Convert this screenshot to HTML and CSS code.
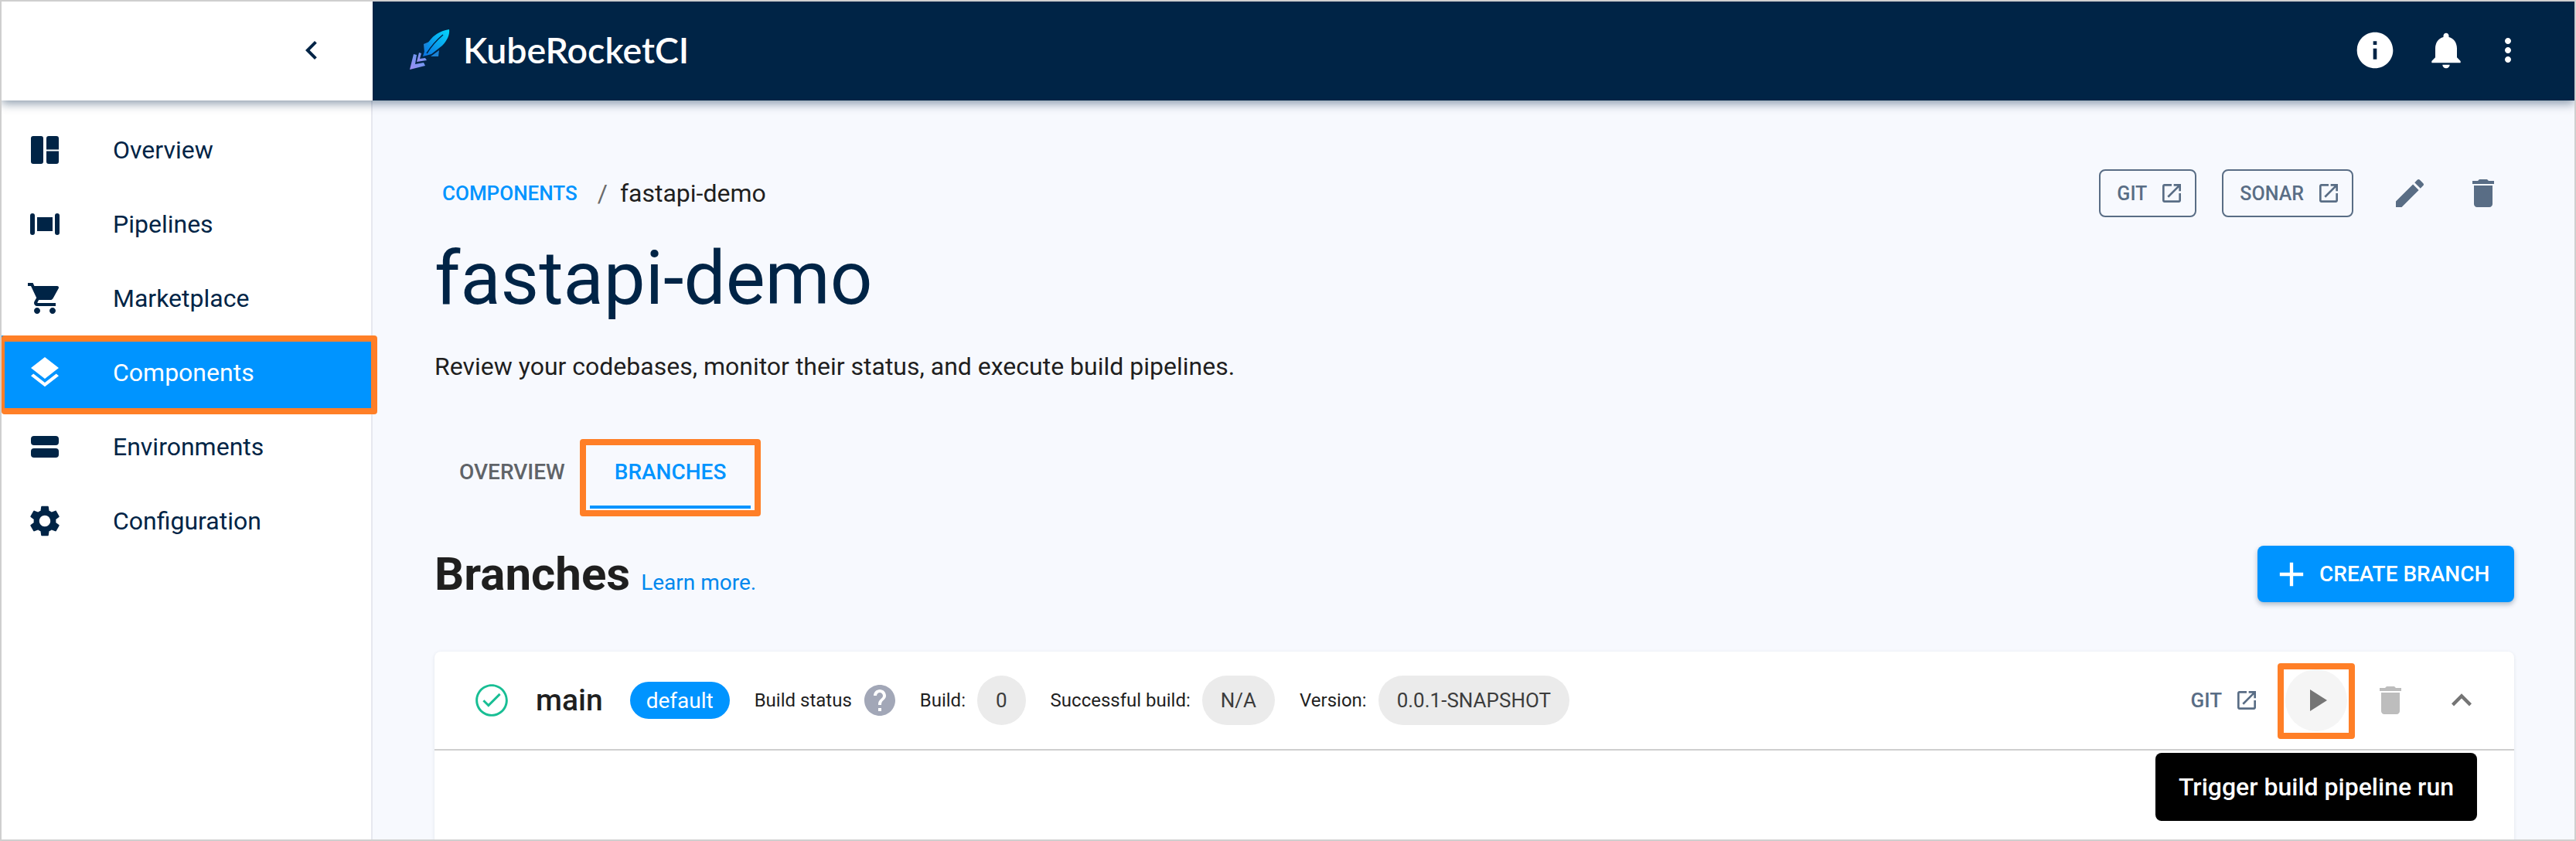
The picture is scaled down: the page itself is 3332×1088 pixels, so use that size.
FILE: index.html
```html
<!DOCTYPE html>
<html lang="en">
  <head>
    <meta charset="UTF-8" />
    <meta name="viewport" content="width=device-width, initial-scale=1.0" />
    <title>KubeRocketCI - fastapi-demo</title>
    <link rel="stylesheet" href="styles.css">
  </head>
  <body>
    <div class="frame">
      <header class="topbar">
        <div class="topbar-left">
          <svg class="icon collapse" viewBox="0 0 24 24"><path d="M15.41 7.41 14 6l-6 6 6 6 1.41-1.41L10.83 12z"/></svg>
        </div>
        <div class="topbar-right">
          <div class="brand">
            <svg class="logo" viewBox="0 0 52 52">
              <defs>
                <linearGradient id="body" x1="1" y1="0" x2="0" y2="1">
                  <stop offset="0" stop-color="#05d8fb"/>
                  <stop offset="1" stop-color="#0b6fe0"/>
                </linearGradient>
                <linearGradient id="tail" x1="1" y1="0" x2="0" y2="1">
                  <stop offset="0" stop-color="#5a9cf0"/>
                  <stop offset="1" stop-color="#a08cf2"/>
                </linearGradient>
              </defs>
              <path d="M18 19L25 16 19 30z" fill="#1b83d6"/>
              <path d="M38 27L37 35 27 35z" fill="#1b83d6"/>
              <path d="M51 0C52 7 48 15 42 21L28 32 17 35 20 25C22 20 24 16 27 13 30 9 38 2 51 0z" fill="url(#body)"/>
              <path d="M43 7C37 12 29 20 22 31" stroke="#002446" stroke-width="1.5" fill="none"/>
              <path d="M5 32L0 52 20 47 18 43 7 45 9 33z" fill="url(#tail)"/>
              <path d="M12 30L9 42 22 40 20 37 13 38 15 31z" fill="url(#tail)"/>
            </svg>
            <span class="brand-name">KubeRocketCI</span>
          </div>
          <div class="topbar-icons">
            <svg class="icon icon-lg" viewBox="0 0 24 24"><path d="M12 2C6.48 2 2 6.48 2 12s4.48 10 10 10 10-4.48 10-10S17.52 2 12 2zm1 15h-2v-6h2v6zm0-8h-2V7h2v2z"/></svg>
            <svg class="icon icon-lg" viewBox="0 0 24 24"><path d="M12 22c1.1 0 2-.9 2-2h-4c0 1.1.89 2 2 2zm6-6v-5c0-3.07-1.64-5.64-4.5-6.32V4c0-.83-.67-1.5-1.5-1.5s-1.5.67-1.5 1.5v.68C7.63 5.36 6 7.92 6 11v5l-2 2v1h16v-1l-2-2z"/></svg>
            <svg class="icon" viewBox="0 0 24 24"><path d="M12 8c1.1 0 2-.9 2-2s-.9-2-2-2-2 .9-2 2 .9 2 2 2zm0 2c-1.1 0-2 .9-2 2s.9 2 2 2 2-.9 2-2-.9-2-2-2zm0 6c-1.1 0-2 .9-2 2s.9 2 2 2 2-.9 2-2-.9-2-2-2z"/></svg>
          </div>
        </div>
      </header>

      <div class="content">
        <nav class="sidebar">
          <a class="nav-item">
            <svg class="icon" viewBox="0 0 24 24"><rect x="3" y="3" width="8" height="18" rx="1.5"/><path d="M13 4.5A1.5 1.5 0 0 1 14.5 3h5A1.5 1.5 0 0 1 21 4.5v7.25h-8zM13 12.75h8v6.75a1.5 1.5 0 0 1-1.5 1.5h-5a1.5 1.5 0 0 1-1.5-1.5z"/></svg>
            Overview
          </a>
          <a class="nav-item">
            <svg class="icon" viewBox="0 0 24 24"><rect x="2.5" y="5" width="3" height="14" rx="1.5"/><rect x="7" y="7.5" width="10" height="9"/><rect x="18.5" y="5" width="3" height="14" rx="1.5"/></svg>
            Pipelines
          </a>
          <a class="nav-item">
            <svg class="icon" viewBox="0 0 24 24"><path d="M7 18c-1.1 0-1.99.9-1.99 2S5.9 22 7 22s2-.9 2-2-.9-2-2-2zM1 2v2h2l3.6 7.59-1.35 2.45c-.16.28-.25.61-.25.96 0 1.1.9 2 2 2h12v-2H7.42c-.14 0-.25-.11-.25-.25l.03-.12.9-1.63h7.45c.75 0 1.41-.41 1.75-1.03l3.58-6.49c.08-.14.12-.31.12-.48 0-.55-.45-1-1-1H5.21l-.94-2H1zm16 16c-1.1 0-1.99.9-1.99 2s.89 2 1.99 2 2-.9 2-2-.9-2-2-2z"/></svg>
            Marketplace
          </a>
          <a class="nav-item active">
            <svg class="icon" viewBox="0 0 24 24"><path d="M11.99 18.54l-7.37-5.73L3 14.07l9 7 9-7-1.63-1.27-7.38 5.74zM12 16l7.36-5.73L21 9l-9-7-9 7 1.63 1.27L12 16z"/></svg>
            Components
            <span class="mark mark-nav"></span>
          </a>
          <a class="nav-item">
            <svg class="icon" viewBox="0 0 24 24"><rect x="3" y="5" width="18" height="6" rx="2"/><rect x="3" y="13" width="18" height="6" rx="2"/></svg>
            Environments
          </a>
          <a class="nav-item">
            <svg class="icon" viewBox="0 0 24 24"><path d="M19.14 12.94c.04-.3.06-.61.06-.94 0-.32-.02-.64-.07-.94l2.03-1.58c.18-.14.23-.41.12-.61l-1.92-3.32c-.12-.22-.37-.29-.59-.22l-2.39.96c-.5-.38-1.03-.7-1.62-.94l-.36-2.54c-.04-.24-.24-.41-.48-.41h-3.84c-.24 0-.43.17-.47.41l-.36 2.54c-.59.24-1.13.57-1.62.94l-2.39-.96c-.22-.08-.47 0-.59.22L2.74 8.87c-.12.21-.08.47.12.61l2.03 1.58c-.05.3-.09.63-.09.94s.02.64.07.94l-2.03 1.58c-.18.14-.23.41-.12.61l1.92 3.32c.12.22.37.29.59.22l2.39-.96c.5.38 1.03.7 1.62.94l.36 2.54c.05.24.24.41.48.41h3.84c.24 0 .44-.17.47-.41l.36-2.54c.59-.24 1.13-.56 1.62-.94l2.39.96c.22.08.47 0 .59-.22l1.92-3.32c.12-.22.07-.47-.12-.61l-2.01-1.58zM12 15.6c-1.98 0-3.6-1.62-3.6-3.6s1.62-3.6 3.6-3.6 3.6 1.62 3.6 3.6-1.62 3.6-3.6 3.6z"/></svg>
            Configuration
          </a>
        </nav>

        <main class="page">
          <div class="page-top">
            <div class="breadcrumbs">
              <a class="crumb-link">COMPONENTS</a>
              <span class="crumb-sep">/</span>
              <span class="crumb-current">fastapi-demo</span>
            </div>
            <div class="page-actions">
              <a class="outline-btn">GIT
                <svg class="icon icon-sm" viewBox="0 0 24 24"><path d="M19 19H5V5h7V3H5c-1.11 0-2 .9-2 2v14c0 1.1.89 2 2 2h14c1.1 0 2-.9 2-2v-7h-2v7zM14 3v2h3.59l-9.83 9.83 1.41 1.41L19 6.41V10h2V3h-7z"/></svg>
              </a>
              <a class="outline-btn">SONAR
                <svg class="icon icon-sm" viewBox="0 0 24 24"><path d="M19 19H5V5h7V3H5c-1.11 0-2 .9-2 2v14c0 1.1.89 2 2 2h14c1.1 0 2-.9 2-2v-7h-2v7zM14 3v2h3.59l-9.83 9.83 1.41 1.41L19 6.41V10h2V3h-7z"/></svg>
              </a>
              <svg class="icon icon-slate edit-icon" viewBox="0 0 24 24"><path d="M3 17.25V21h3.75L17.81 9.94l-3.75-3.75L3 17.25zM20.71 7.04c.39-.39.39-1.02 0-1.41l-2.34-2.34c-.39-.39-1.02-.39-1.41 0l-1.83 1.83 3.75 3.75 1.83-1.83z"/></svg>
              <svg class="icon icon-slate delete-icon" viewBox="0 0 24 24"><path d="M6 19c0 1.1.9 2 2 2h8c1.1 0 2-.9 2-2V7H6v12zM19 4h-3.5l-1-1h-5l-1 1H5v2h14V4z"/></svg>
            </div>
          </div>

          <h1 class="title">fastapi-demo</h1>
          <p class="description">Review your codebases, monitor their status, and execute build pipelines.</p>

          <div class="tabs">
            <a class="tab">OVERVIEW</a>
            <a class="tab selected">BRANCHES<span class="mark mark-tab"></span></a>
          </div>

          <div class="section-head">
            <div class="section-title">
              <h2>Branches</h2>
              <a class="learn-more">Learn more.</a>
            </div>
            <button class="create-btn">
              <svg class="icon plus-icon" viewBox="0 0 24 24"><path d="M19 13h-6v6h-2v-6H5v-2h6V5h2v6h6v2z"/></svg>
              CREATE BRANCH
            </button>
          </div>

          <section class="card">
            <div class="card-head">
              <svg class="icon status-icon" viewBox="0 0 24 24"><path d="M12 2C6.48 2 2 6.48 2 12s4.48 10 10 10 10-4.48 10-10S17.52 2 12 2zm0 18.6c-4.74 0-8.6-3.86-8.6-8.6S7.26 3.4 12 3.4s8.6 3.86 8.6 8.6-3.86 8.6-8.6 8.6zm4.6-13.02L10 14.17l-2.6-2.58L6.4 12.6l3.6 3.6 7.6-7.6z"/></svg>
              <span class="branch-name">main</span>
              <span class="default-chip">default</span>
              <div class="meta meta-status">
                <span>Build status</span>
                <svg class="icon help-icon" viewBox="0 0 24 24"><path d="M12 2C6.48 2 2 6.48 2 12s4.48 10 10 10 10-4.48 10-10S17.52 2 12 2zm1 17h-2v-2h2v2zm2.07-7.75-.9.92C13.45 12.9 13 13.5 13 15h-2v-.5c0-1.1.45-2.1 1.17-2.83l1.24-1.26c.37-.36.59-.86.59-1.41 0-1.1-.9-2-2-2s-2 .9-2 2H8c0-2.21 1.79-4 4-4s4 1.79 4 4c0 .88-.36 1.68-.93 2.25z"/></svg>
              </div>
              <div class="meta"><span>Build:</span><span class="chip">0</span></div>
              <div class="meta"><span>Successful build:</span><span class="chip">N/A</span></div>
              <div class="meta"><span>Version:</span><span class="chip">0.0.1-SNAPSHOT</span></div>

              <div class="card-actions">
                <a class="git-link">GIT
                  <svg class="icon icon-sm" viewBox="0 0 24 24"><path d="M19 19H5V5h7V3H5c-1.11 0-2 .9-2 2v14c0 1.1.89 2 2 2h14c1.1 0 2-.9 2-2v-7h-2v7zM14 3v2h3.59l-9.83 9.83 1.41 1.41L19 6.41V10h2V3h-7z"/></svg>
                </a>
                <div class="play-btn">
                  <svg class="icon" viewBox="0 0 24 24"><path d="M8 5v14l11-7z"/></svg>
                  <span class="mark mark-play"></span>
                  <span class="tooltip">Trigger build pipeline run</span>
                </div>
                <svg class="icon trash-disabled" viewBox="0 0 24 24"><path d="M6 19c0 1.1.9 2 2 2h8c1.1 0 2-.9 2-2V7H6v12zM19 4h-3.5l-1-1h-5l-1 1H5v2h14V4z"/></svg>
                <svg class="icon expand-icon" viewBox="0 0 24 24"><path d="M7.41 15.41 12 10.83l4.59 4.58L18 14l-6-6-6 6z"/></svg>
              </div>
            </div>
          </section>
        </main>
      </div>
    </div>
  </body>
</html>
```

FILE: styles.css
```css
* {
  box-sizing: border-box;
}
html,
body {
  margin: 0;
  height: 100%;
  overflow: hidden;
}
body {
  font-family: Roboto, "Liberation Sans", sans-serif;
  color: #1f1f1f;
}
.frame {
  height: 1088px;
  border: 2px solid #cfcfcf;
  display: flex;
  flex-direction: column;
  overflow: hidden;
  background: #f7f9fe;
}
.icon {
  display: block;
  width: 48px;
  height: 48px;
  flex: none;
  fill: currentColor;
}
.icon-lg {
  width: 56px;
  height: 56px;
}
.icon-sm {
  width: 32px;
  height: 32px;
}
.icon-slate {
  color: #596d85;
}

/* top bar */
.topbar {
  display: grid;
  grid-template-columns: 480px 1fr;
  height: 128px;
  flex: none;
  position: relative;
  z-index: 2;
  box-shadow: 0 4px 12px rgba(0, 36, 70, 0.45);
}
.topbar-left {
  background: #fff;
  color: #002446;
  display: flex;
  align-items: center;
  padding-left: 377px;
}
.collapse {
  margin-top: -2px;
}
.topbar-right {
  background: #002446;
  color: #fff;
  display: flex;
  align-items: center;
  justify-content: space-between;
  padding-left: 48px;
  padding-right: 62px;
}
.brand {
  display: flex;
  align-items: center;
  gap: 17px;
  margin-top: -4px;
}
.logo {
  width: 52px;
  height: 52px;
}
.brand-name {
  font-family: Lato, sans-serif;
  font-size: 46.5px;
  font-weight: 600;
}
.topbar-icons {
  display: flex;
  align-items: center;
  gap: 36px;
  margin-top: -2px;
}
.topbar-icons .icon:last-child {
  margin-left: -8px;
}

/* sidebar */
.content {
  flex: 1;
  display: flex;
  min-height: 0;
}
.sidebar {
  width: 480px;
  flex: none;
  background: #fff;
  border-right: 2px solid #e6e8ef;
  padding-top: 16px;
}
.nav-item {
  position: relative;
  display: flex;
  align-items: center;
  height: 96px;
  padding-left: 32px;
  gap: 64px;
  font-size: 32px;
  color: #002446;
}
.nav-item.active {
  background: #0094ff;
  color: #fff;
  margin-right: -2px;
}

/* orange annotation frames */
.mark {
  position: absolute;
  border: 8px solid #ff7f27;
  border-radius: 4px;
  pointer-events: none;
}
.mark-nav {
  top: 0;
  left: 0;
  right: -6px;
  bottom: -6px;
  border-left-width: 4px;
  z-index: 1;
}
.mark-tab {
  top: 6px;
  left: -13px;
  right: -13px;
  bottom: -14px;
}
.mark-play {
  top: -8px;
  left: -10px;
  right: -10px;
  bottom: -10px;
}

/* page */
.page {
  flex: 1;
  min-width: 0;
  padding: 89px 78px 0 80px;
}
.page-top {
  display: flex;
  align-items: center;
  justify-content: space-between;
  height: 62px;
}
.breadcrumbs {
  display: flex;
  align-items: center;
  padding-left: 10px;
  font-size: 32px;
}
.crumb-link {
  font-size: 26px;
  font-weight: 500;
  color: #0094ff;
}
.crumb-sep {
  margin: 0 16px 0 26px;
  color: #6b6b6b;
}
.page-actions {
  display: flex;
  align-items: center;
  margin-right: 2px;
}
.outline-btn {
  display: flex;
  align-items: center;
  gap: 16px;
  height: 62px;
  padding: 0 14px 0 21px;
  margin-right: 33px;
  border: 2px solid #596d85;
  border-radius: 8px;
  font-size: 25px;
  font-weight: 500;
  color: #596d85;
}
.edit-icon {
  margin-left: 16px;
}
.delete-icon {
  margin-left: 47px;
  margin-right: 14px;
}
.title {
  margin: 23px 0 0;
  font-size: 96px;
  line-height: 112px;
  font-weight: 400;
  color: #002446;
}
.description {
  margin: 38px 0 0;
  font-size: 32px;
  line-height: 40px;
  color: #1f1f1f;
}

/* tabs */
.tabs {
  display: flex;
  margin-top: 68px;
  height: 96px;
}
.tab {
  position: relative;
  display: block;
  padding: 32px 32px 0;
  font-size: 28px;
  font-weight: 500;
  color: #5f6368;
}
.tab.selected {
  color: #0094ff;
  border-bottom: 4px solid #0094ff;
}

/* section heading */
.section-head {
  display: flex;
  align-items: center;
  justify-content: space-between;
  height: 73px;
  margin-top: 48px;
}
.section-title {
  display: flex;
  align-items: baseline;
  gap: 14px;
}
.section-title h2 {
  margin: 0;
  font-size: 60px;
  font-weight: 700;
  color: #1f1f1f;
}
.learn-more {
  font-size: 28px;
  color: #0088ee;
}
.create-btn {
  display: flex;
  align-items: center;
  height: 73px;
  width: 332px;
  padding: 0 0 0 18px;
  gap: 10px;
  border: none;
  border-radius: 8px;
  background: #0094ff;
  color: #fff;
  font-family: inherit;
  font-size: 28px;
  font-weight: 500;
  box-shadow: 0 3px 6px rgba(0, 36, 70, 0.3);
}
.plus-icon {
  width: 52px;
  height: 52px;
}

/* branch card */
.card {
  margin-top: 64px;
  height: 300px;
  background: #fff;
  border-radius: 8px 8px 0 0;
  box-shadow: 0 1px 4px rgba(0, 36, 70, 0.1);
}
.card-head {
  display: flex;
  align-items: center;
  height: 128px;
  padding: 0 42px 0 49px;
  border-bottom: 2px solid #cfcfcf;
  font-size: 24px;
  color: #1f1f1f;
}
.status-icon {
  color: #18be94;
  width: 50px;
  height: 50px;
}
.branch-name {
  margin-left: 32px;
  font-size: 39px;
  font-weight: 500;
}
.default-chip {
  display: flex;
  align-items: center;
  justify-content: center;
  width: 129px;
  height: 48px;
  margin-left: 35px;
  border-radius: 24px;
  background: #0094ff;
  color: #fff;
  font-size: 28px;
}
.meta {
  display: flex;
  align-items: center;
  gap: 15px;
  margin-left: 32px;
}
.meta-status {
  gap: 12px;
}
.meta-status + .meta {
  margin-left: 28px;
}
.chip {
  display: flex;
  align-items: center;
  height: 64px;
  padding: 0 24px;
  border-radius: 32px;
  background: #ebebeb;
  color: #3c3c3c;
  font-size: 26px;
}
.help-icon {
  color: #a2a7b7;
}
.card-actions {
  display: flex;
  align-items: center;
  margin-left: auto;
}
.git-link {
  display: flex;
  align-items: center;
  gap: 16px;
  font-size: 26px;
  font-weight: 500;
  color: #596d85;
}
.play-btn {
  position: relative;
  display: flex;
  align-items: center;
  justify-content: center;
  width: 80px;
  height: 80px;
  margin-left: 34px;
  border-radius: 50%;
  background: #f5f5f5;
  color: #757575;
}
.tooltip {
  position: absolute;
  top: 108px;
  left: 50%;
  transform: translateX(-50%);
  display: flex;
  align-items: center;
  height: 88px;
  padding: 0 30px;
  border-radius: 8px;
  background: #000;
  color: #fff;
  font-size: 32px;
  font-weight: 500;
  white-space: nowrap;
  z-index: 3;
}
.trash-disabled {
  margin-left: 32px;
  color: #bdbdbd;
}
.expand-icon {
  width: 52px;
  height: 52px;
  margin-left: 42px;
  color: #757575;
}
```
